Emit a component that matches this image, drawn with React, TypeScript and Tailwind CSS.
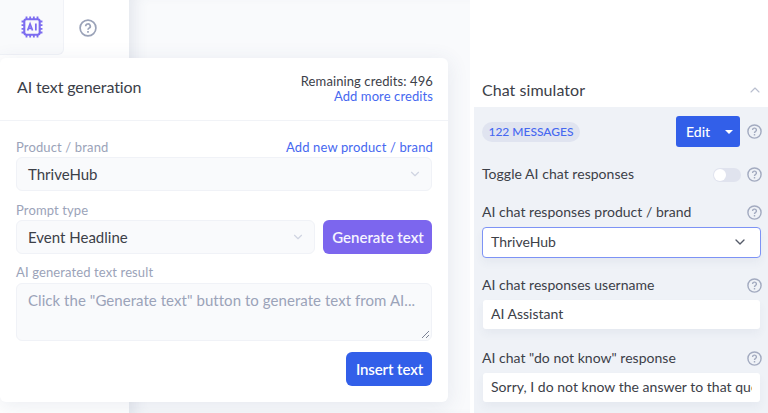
import type { ReactNode } from 'react'
import { ChevronDown, ChevronUp } from 'lucide-react'

const PINS = [6, 10, 14, 18]

function ChipIcon() {
    return (
        <svg width="22" height="22" viewBox="0 0 24 24" fill="none" stroke="#7c6cf0" strokeWidth="2">
            <rect x="3.6" y="3.6" width="16.8" height="16.8" rx="2.4" strokeWidth="2.3" />
            {PINS.map((p) => (
                <path key={p} d={`M${p} 0.6v3M${p} 20.4v3M0.6 ${p}h3M20.4 ${p}h3`} />
            ))}
            <path d="M7.2 15.8l2.7-7.2 2.7 7.2M8.2 13.6h3.4M16.2 8.1v7.8" strokeWidth="1.9" />
        </svg>
    )
}

function HelpIcon({ size = 15, color = '#a3abc0' }: { size?: number; color?: string }) {
    return (
        <svg width={size} height={size} viewBox="0 0 18 18" fill="none" stroke={color} strokeWidth="1.7" className="shrink-0">
            <circle cx="9" cy="9" r="7.9" />
            <path d="M6.7 7.2a2.3 2.2 0 1 1 3.4 1.9c-.8.5-1.1.8-1.1 1.6" />
            <path d="M9 12v1.8" />
        </svg>
    )
}

function Select({ value, className }: { value: string; className?: string }) {
    return (
        <div className={`flex h-[34px] items-center justify-between rounded-md border border-[#f0f2f7] bg-[#f9fafc] pr-[9px] pl-[11px] text-[15px] text-[#3c4048] ${className ?? ''}`}>
            {value}
            <ChevronDown className="h-3.5 w-3.5 text-[#d0d4e2]" strokeWidth={2} />
        </div>
    )
}

function SettingLabel({ children }: { children: ReactNode }) {
    return (
        <div className="flex h-[15px] items-center justify-between text-sm text-[#3c4048]">
            <span className="pb-px tracking-[0.02px]">{children}</span>
            <HelpIcon />
        </div>
    )
}

function TextGeneration() {
    return (
        <div className="absolute top-[58px] left-0 h-[344px] w-[448px] rounded-md bg-white shadow-[0_4px_20px_2px_rgba(60,80,120,0.09)]">
            <div className="flex h-[63px] items-center justify-between border-b border-[#f1f3f7] pr-[15px] pl-[17px]">
                <h2 className="pb-[5px] text-base tracking-[-0.12px] text-[#3c4048]">AI text generation</h2>
                <div className="text-right text-[13px] leading-[15px] tracking-[0.1px] text-[#3c4048]">
                    <p>Remaining credits: 496</p>
                    <p className="text-[#4668f0]">Add more credits</p>
                </div>
            </div>

            <div className="px-4 pt-[18px] text-[13px] leading-4 text-[#9ba3b9]">
                <div className="-mr-px flex justify-between tracking-[0.14px]">
                    <span>Product / brand</span>
                    <span className="text-[#4668f0]">Add new product / brand</span>
                </div>
                <Select value="ThriveHub" className="mt-[2px]" />

                <div className="mt-[11px] tracking-[0.12px]">Prompt type</div>
                <div className="mt-[2px] flex gap-2">
                    <Select value="Event Headline" className="flex-1" />
                    <button className="h-[34px] w-[109px] rounded-md bg-[#7c66ee] pl-px text-[15px] font-semibold text-[#f5f4ff]">Generate text</button>
                </div>

                <div className="mt-[10px] mb-[3px] tracking-[0.12px]">AI generated text result</div>
                <div className="relative h-[58px] rounded-md border border-[#f0f2f7] bg-[#f9fafc] pt-2 pl-[11px] text-[15px] tracking-[0.05px] whitespace-nowrap">
                    Click the "Generate text" button to generate text from AI...
                    <svg className="absolute right-px bottom-px" width="9" height="9" stroke="#7c8396" strokeWidth="1">
                        <path d="M1 8l7-7M5 8l3-3" />
                    </svg>
                </div>

                <div className="mt-[11px] flex justify-end">
                    <button className="h-[34px] w-[86px] rounded-md bg-[#325fe9] pl-px text-[15px] font-semibold tracking-[-0.1px] text-white">Insert text</button>
                </div>
            </div>
        </div>
    )
}

function ChatSimulator() {
    return (
        <aside className="flex w-[294px] shrink-0 flex-col bg-white">
            <div className="flex h-[107px] items-end justify-between pr-[5px] pb-[7px] pl-2">
                <h2 className="text-base leading-5 tracking-[0.05px] text-[#3c4048]">Chat simulator</h2>
                <ChevronUp className="mb-[2px] h-4 w-4 text-[#b9bfcf]" strokeWidth={1.7} />
            </div>

            <div className="flex-1 bg-[#eff2f7] pt-[9px] pr-[6px] pl-2">
                <div className="flex h-[31px] items-center">
                    <span className="mt-px flex h-5 w-[98px] items-center justify-center rounded-full bg-[#e0e4f0] text-xs font-medium text-[#4668f0]">122 MESSAGES</span>
                    <button className="mr-[7px] ml-auto flex h-[31px] w-[64px] items-center justify-between rounded-[3px] bg-[#325fe9] pr-[7px] pl-[10px] text-sm font-medium text-white">
                        Edit
                        <svg width="8" height="4" fill="currentColor">
                            <path d="M0 0h8L4 4z" />
                        </svg>
                    </button>
                    <HelpIcon />
                </div>

                <div className="mt-5 flex h-[15px] items-center text-sm text-[#3c4048]">
                    <span className="pb-px tracking-[0.04px]">Toggle AI chat responses</span>
                    <span className="mr-[6px] ml-auto flex h-[14px] w-[28px] items-center rounded-full bg-[#e0e3ee] px-[1px]">
                        <span className="h-3 w-3 rounded-full bg-white" />
                    </span>
                    <HelpIcon />
                </div>

                <div className="mt-[23px]">
                    <SettingLabel>AI chat responses product / brand</SettingLabel>
                    <div className="mt-[7px] mr-px flex h-[31px] items-center justify-between rounded-[4px] border border-[#7d93f5] bg-white pr-3 pb-px pl-2 text-sm text-[#3c4048] shadow-[0_5px_8px_rgba(60,80,120,0.05)]">
                        ThriveHub
                        <ChevronDown className="h-4 w-4 text-[#555b69]" strokeWidth={2} />
                    </div>
                </div>

                <div className="mt-5">
                    <SettingLabel>AI chat responses username</SettingLabel>
                    <div className="mt-[7px] mr-[2px] ml-px h-[29px] rounded-[3px] bg-white px-2 text-sm leading-[28px] text-[#3c4048] shadow-[0_5px_8px_rgba(60,80,120,0.05)]">AI Assistant</div>
                </div>

                <div className="mt-[22px]">
                    <SettingLabel>AI chat "do not know" response</SettingLabel>
                    <div className="mt-[7px] mr-[2px] ml-px h-[29px] rounded-[3px] bg-white px-2 text-sm leading-[28px] text-[#3c4048] shadow-[0_5px_8px_rgba(60,80,120,0.05)]">
                        <div className="overflow-hidden tracking-[0.02px] whitespace-nowrap">Sorry, I do not know the answer to that question</div>
                    </div>
                </div>
            </div>
        </aside>
    )
}

export default function App() {
    return (
        <div className="relative flex h-[413px] w-[768px] overflow-hidden bg-white font-[Lato,sans-serif]">
            <div className="w-[129px] shrink-0">
                <div className="flex h-[55px]">
                    <div className="flex w-16 items-center justify-center rounded-br-md border-r border-b border-[#f0f2f7] bg-[#f9fafc]">
                        <ChipIcon />
                    </div>
                    <div className="flex flex-1 items-center justify-center pr-[18px]">
                        <HelpIcon size={18} color="#9aa2b8" />
                    </div>
                </div>
            </div>
            <div className="flex-1 bg-[#f9fafc] shadow-[inset_14px_0_14px_-8px_rgba(60,80,120,0.1)]" />
            <div className="w-1 shrink-0" />
            <ChatSimulator />
            <TextGeneration />
        </div>
    )
}
